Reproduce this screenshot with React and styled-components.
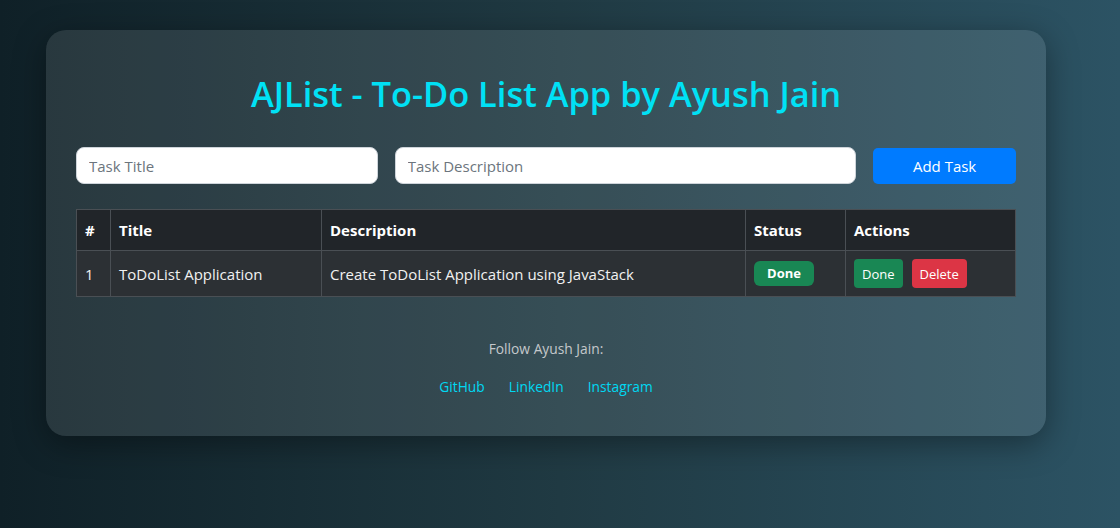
import React from "react";
import styled, { createGlobalStyle } from "styled-components";

const GlobalStyle = createGlobalStyle`
  * { box-sizing: border-box; }
  html, body {
    margin: 0;
    min-height: 100%;
  }
  body {
    min-height: 528px;
    font-family: "Open Sans", "Noto Sans", sans-serif;
    background: linear-gradient(to right, #0f2027, #203a43, #2c5364);
    color: #fff;
  }
`;

const Page = styled.div`
  padding: 30px 74px 0 46px;
`;

const Card = styled.div`
  width: 1000px;
  height: 406px;
  padding: 43px 30px 30px;
  border-radius: 20px;
  background: rgba(255, 255, 255, 0.1);
  box-shadow: 0 8px 32px rgba(0, 0, 0, 0.37);
  display: flex;
  flex-direction: column;
`;

const Title = styled.h1`
  margin: 0 0 33px;
  text-align: center;
  font-size: 34.4px;
  font-weight: 600;
  line-height: 1.2;
  color: #00e1f5;
`;

const Form = styled.div`
  display: flex;
  align-items: center;
  gap: 17px;
  margin-bottom: 25px;
`;

const Input = styled.input`
  width: ${(p) => p.$w}px;
  height: 37px;
  padding: 6px 12px;
  border: 1px solid #ced4da;
  border-radius: 8px;
  font-family: inherit;
  font-size: 15px;
  color: #212529;
  background: #fff;
  &::placeholder { color: #6c757d; }
`;

const AddButton = styled.button`
  width: 143px;
  height: 36px;
  border: none;
  border-radius: 5px;
  background: #007bff;
  color: #fff;
  font-family: inherit;
  font-size: 15px;
`;

const Table = styled.table`
  width: 940px;
  border-collapse: collapse;
  font-size: 15px;
  th, td {
    border: 1px solid #4a4f54;
    padding: 8px;
    text-align: left;
    vertical-align: middle;
  }
  th {
    background: #212529;
    font-weight: 700;
    height: 41px;
  }
  td {
    background: #2c3034;
    height: 46px;
    color: #f1f1f1;
  }
`;

const Badge = styled.span`
  display: inline-block;
  width: 60px;
  padding: 3px 0 4px;
  border-radius: 6px;
  background: #198754;
  color: #fff;
  font-size: 13px;
  font-weight: 700;
  text-align: center;
`;

const SmallButton = styled.button`
  height: 29px;
  padding: 0 8px;
  margin-right: 9px;
  border: none;
  border-radius: 4px;
  background: ${(p) => (p.$danger ? "#dc3545" : "#198754")};
  color: #fff;
  font-family: inherit;
  font-size: 13px;
`;

const Footer = styled.footer`
  margin-top: 42px;
  text-align: center;
  font-size: 13.8px;
`;

const FollowText = styled.p`
  margin: 0 0 19px;
  color: #c4c8cb;
`;

const Links = styled.div`
  display: flex;
  justify-content: center;
  gap: 24px;
`;

const Link = styled.a`
  color: #00d8f2;
  text-decoration: none;
`;

export default function App() {
  return (
    <>
      <GlobalStyle />
      <Page>
        <Card>
          <Title>AJList - To-Do List App by Ayush Jain</Title>
          <Form>
            <Input $w={302} placeholder="Task Title" />
            <Input $w={462} placeholder="Task Description" />
            <AddButton>Add Task</AddButton>
          </Form>
          <Table>
            <thead>
              <tr>
                <th style={{ width: 34 }}>#</th>
                <th style={{ width: 211 }}>Title</th>
                <th style={{ width: 424 }}>Description</th>
                <th style={{ width: 100 }}>Status</th>
                <th>Actions</th>
              </tr>
            </thead>
            <tbody>
              <tr>
                <td>1</td>
                <td>ToDoList Application</td>
                <td>Create ToDoList Application using JavaStack</td>
                <td>
                  <Badge>Done</Badge>
                </td>
                <td>
                  <SmallButton>Done</SmallButton>
                  <SmallButton $danger>Delete</SmallButton>
                </td>
              </tr>
            </tbody>
          </Table>
          <Footer>
            <FollowText>Follow Ayush Jain:</FollowText>
            <Links>
              <Link href="#">GitHub</Link>
              <Link href="#">LinkedIn</Link>
              <Link href="#">Instagram</Link>
            </Links>
          </Footer>
        </Card>
      </Page>
    </>
  );
}
